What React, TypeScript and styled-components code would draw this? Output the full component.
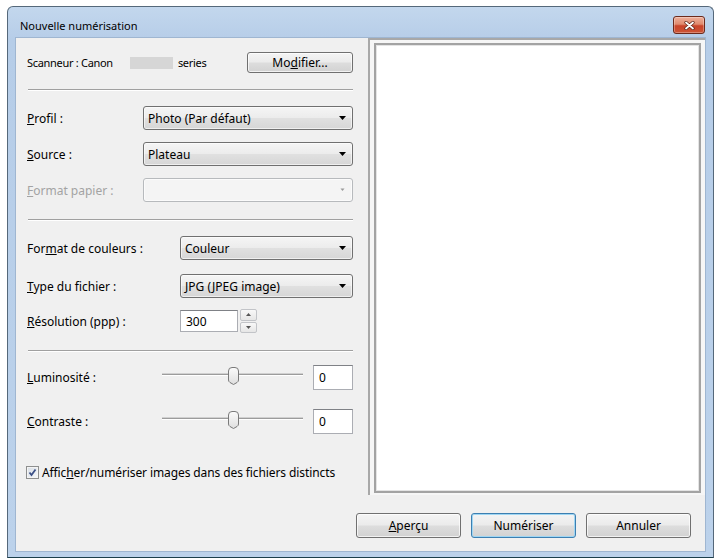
import React from 'react';
import styled, { createGlobalStyle } from 'styled-components';

const GlobalStyle = createGlobalStyle`
  html, body {
    margin: 0;
    padding: 0;
    background: #ffffff;
  }
  body {
    font-family: "Noto Sans", "Open Sans", sans-serif;
    font-size: 12px;
    color: #000;
  }
`;

// cadre de la fenêtre
const Window = styled.div`
  margin: 6px 0 0 7px;
  width: 707px;
  height: 552px;
  box-sizing: border-box;
  border: 1px solid #55687a;
  border-bottom-color: #1c3f4c;
  border-radius: 6px 6px 0 0;
  background: linear-gradient(180deg, #c3d7ed 0%, #b6cde8 6%, #bcd2eb 100%);
  padding: 0 8px 6px;
  display: flex;
  flex-direction: column;
`;

const TitleBar = styled.div`
  height: 31px;
  flex-shrink: 0;
  box-sizing: border-box;
  padding: 5px 0 0 4px;
  display: flex;
  align-items: center;
  justify-content: space-between;
`;

const Title = styled.span`
  font-size: 11px;
  color: #000;
`;

const CloseButton = styled.div`
  width: 32px;
  height: 18px;
  box-sizing: border-box;
  border: 1px solid #6b2a1c;
  border-radius: 3px;
  background: linear-gradient(180deg, #eeb09c 0%, #e08a6e 45%, #c9442a 55%, #cc5436 100%);
  box-shadow: inset 0 0 0 1px rgba(255, 255, 255, 0.3);
  display: flex;
  align-items: center;
  justify-content: center;
`;

const Client = styled.div`
  flex: 1;
  background: #f0f0f0;
  box-shadow: 0 0 0 1px #9fb6d1;
  display: flex;
  flex-direction: column;
`;

const TopRow = styled.div`
  display: flex;
  height: 457px;
`;

const LeftPanel = styled.div`
  width: 352px;
  flex-shrink: 0;
  box-sizing: border-box;
  padding: 0 15px 0 11px;
  display: flex;
  flex-direction: column;
`;

const PreviewOuter = styled.div`
  flex: 1;
  border-left: 2px solid #a8a8a8;
  border-top: 2px solid #a8a8a8;
  padding: 3px 4px 2px 4px;
  background: #f6f6f6;
  display: flex;
`;

const PreviewBox = styled.div`
  flex: 1;
  border: 2px solid #a3a3a3;
  background: #ffffff;
  box-shadow: inset 0 0 0 1px #e4e4e4;
`;

const ButtonRow = styled.div`
  display: flex;
  justify-content: flex-end;
  gap: 10px;
  padding: 18px 14px 0 0;
`;

const Button = styled.div<{ $primary?: boolean; $width?: number }>`
  width: ${(p) => p.$width ?? 105}px;
  height: ${(p) => (p.$width ? 21 : 25)}px;
  box-sizing: border-box;
  border: 1px solid ${(p) => (p.$primary ? '#3c7fb1' : '#707070')};
  border-radius: 3px;
  background: linear-gradient(180deg, #f4f4f4 0%, #ebebeb 48%, #dddddd 52%, #d2d2d2 100%);
  box-shadow: inset 0 0 0 1px ${(p) => (p.$primary ? '#9fd6f3' : 'rgba(255,255,255,0.7)')};
  display: flex;
  align-items: center;
  justify-content: center;
  flex-shrink: 0;
`;

const Row = styled.div<{ $top: number; $height?: number }>`
  display: flex;
  align-items: center;
  margin-top: ${(p) => p.$top}px;
  height: ${(p) => p.$height ?? 24}px;
`;

const ScannerText = styled.span`
  font-size: 11px;
  letter-spacing: -0.3px;
`;

const Label = styled.span<{ $width: number; $disabled?: boolean }>`
  width: ${(p) => p.$width}px;
  flex-shrink: 0;
  color: ${(p) => (p.$disabled ? '#a3a3a3' : '#000')};
`;

const Key = styled.span`
  text-decoration: underline;
`;

const Separator = styled.div<{ $top: number }>`
  margin: ${(p) => p.$top}px 0 0 1px;
  height: 1px;
  background: #a0a0a0;
  border-bottom: 1px solid #ffffff;
`;

const Redacted = styled.span`
  display: inline-block;
  width: 43px;
  height: 12px;
  margin: 0 5px 0 17px;
  background: #d6d6d6;
`;

const Combo = styled.div<{ $disabled?: boolean }>`
  flex: 1;
  height: 100%;
  box-sizing: border-box;
  border: 1px solid ${(p) => (p.$disabled ? '#b7babd' : '#707070')};
  border-radius: 3px;
  background: ${(p) =>
    p.$disabled
      ? '#f4f4f4'
      : 'linear-gradient(180deg, #f5f5f5 0%, #ececec 48%, #e0e0e0 52%, #d6d6d6 100%)'};
  box-shadow: inset 0 0 0 1px rgba(255, 255, 255, 0.6);
  display: flex;
  align-items: center;
  justify-content: space-between;
  padding: 0 6px 0 4px;
`;

const TextBox = styled.div<{ $width: number; $height: number }>`
  width: ${(p) => p.$width}px;
  height: ${(p) => p.$height}px;
  box-sizing: border-box;
  border: 1px solid #abadb3;
  border-top-color: #7f8186;
  background: #ffffff;
  display: flex;
  align-items: center;
  padding-left: 5px;
  flex-shrink: 0;
`;

const Spinner = styled.div`
  width: 17px;
  height: 24px;
  margin-left: 2px;
  display: flex;
  flex-direction: column;
  gap: 1px;
`;

const SpinHalf = styled.div`
  flex: 1;
  box-sizing: border-box;
  border: 1px solid #c2c4c8;
  border-radius: 2px;
  background: linear-gradient(180deg, #f8f8f8, #e6e6e6);
  display: flex;
  align-items: center;
  justify-content: center;
`;

const Slider = styled.div`
  position: relative;
  width: 141px;
  height: 100%;
  margin-right: 10px;
  flex-shrink: 0;
`;

const Track = styled.div`
  position: absolute;
  left: 0;
  right: 0;
  top: 8px;
  height: 1px;
  background: #9c9c9c;
  border-top: 1px solid #d0d0d0;
  border-bottom: 1px solid #ffffff;
`;

const Thumb = styled.svg`
  position: absolute;
  left: 65px;
  top: 2px;
`;

const CheckBox = styled.div`
  width: 13px;
  height: 13px;
  box-sizing: border-box;
  border: 1px solid #8e8f8f;
  background: linear-gradient(135deg, #d9dfe6, #f5f7fa);
  box-shadow: inset 0 0 0 1px #f4f4f4;
  display: flex;
  align-items: center;
  justify-content: center;
  margin: 0 3px 0 -1px;
`;

const CheckLabel = styled.span`
  letter-spacing: -0.1px;
`;

const Arrow = ({ disabled }: { disabled?: boolean }) => (
  <svg width="7" height="4" viewBox="0 0 7 4">
    <polygon points={disabled ? '1.5,0.5 5.5,0.5 3.5,3' : '0,0 7,0 3.5,4'} fill={disabled ? '#9a9a9a' : '#000'} />
  </svg>
);

const SliderThumb = () => (
  <Thumb width="13" height="18" viewBox="0 0 13 18">
    <defs>
      <linearGradient id="thumbFill" x1="0" y1="0" x2="0" y2="1">
        <stop offset="0" stopColor="#fbfbfb" />
        <stop offset="1" stopColor="#dedede" />
      </linearGradient>
    </defs>
    <path
      d="M1.5 4 Q1.5 0.5 5 0.5 H8 Q11.5 0.5 11.5 4 V13 Q11.5 14.5 10 15.5 L6.5 17.5 L3 15.5 Q1.5 14.5 1.5 13 Z"
      fill="url(#thumbFill)"
      stroke="#7a7a7a"
    />
  </Thumb>
);

const SliderRow = ({ top, label }: { top: number; label: React.ReactNode }) => (
  <Row $top={top} $height={25}>
    <Label $width={135}>{label}</Label>
    <Slider>
      <Track />
      <SliderThumb />
    </Slider>
    <TextBox $width={40} $height={25}>0</TextBox>
  </Row>
);

export default function App() {
  return (
    <>
      <GlobalStyle />
      <Window>
        <TitleBar>
          <Title>Nouvelle numérisation</Title>
          <CloseButton>
            <svg width="11" height="9" viewBox="0 0 11 9">
              <path d="M2 1.5 L9 7.5 M9 1.5 L2 7.5" stroke="#5a2418" strokeWidth="3.2" strokeLinecap="round" />
              <path d="M2 1.5 L9 7.5 M9 1.5 L2 7.5" stroke="#ffffff" strokeWidth="1.8" strokeLinecap="round" />
            </svg>
          </CloseButton>
        </TitleBar>

        <Client>
          <TopRow>
            <LeftPanel>
              <Row $top={14} $height={21}>
                <ScannerText>Scanneur : Canon</ScannerText>
                <Redacted />
                <ScannerText>series</ScannerText>
                <div style={{ flex: 1 }} />
                <Button $width={106}>
                  Mo<Key>d</Key>ifier...
                </Button>
              </Row>

              <Separator $top={16} />

              <Row $top={15}>
                <Label $width={116}>
                  <Key>P</Key>rofil :
                </Label>
                <Combo>
                  <span>Photo (Par défaut)</span>
                  <Arrow />
                </Combo>
              </Row>
              <Row $top={12}>
                <Label $width={116}>
                  <Key>S</Key>ource :
                </Label>
                <Combo>
                  <span>Plateau</span>
                  <Arrow />
                </Combo>
              </Row>
              <Row $top={12}>
                <Label $width={116} $disabled>
                  <Key>F</Key>ormat papier :
                </Label>
                <Combo $disabled>
                  <span />
                  <Arrow disabled />
                </Combo>
              </Row>

              <Separator $top={17} />

              <Row $top={15}>
                <Label $width={153}>
                  For<Key>m</Key>at de couleurs :
                </Label>
                <Combo>
                  <span>Couleur</span>
                  <Arrow />
                </Combo>
              </Row>
              <Row $top={14}>
                <Label $width={153}>
                  <Key>T</Key>ype du fichier :
                </Label>
                <Combo>
                  <span>JPG (JPEG image)</span>
                  <Arrow />
                </Combo>
              </Row>
              <Row $top={11}>
                <Label $width={153}>
                  <Key>R</Key>ésolution (ppp) :
                </Label>
                <TextBox $width={58} $height={22}>300</TextBox>
                <Spinner>
                  <SpinHalf>
                    <svg width="5" height="3" viewBox="0 0 5 3">
                      <polygon points="0,3 5,3 2.5,0" fill="#555" />
                    </svg>
                  </SpinHalf>
                  <SpinHalf>
                    <svg width="5" height="3" viewBox="0 0 5 3">
                      <polygon points="0,0 5,0 2.5,3" fill="#555" />
                    </svg>
                  </SpinHalf>
                </Spinner>
              </Row>

              <Separator $top={17} />

              <SliderRow
                top={13}
                label={
                  <>
                    <Key>L</Key>uminosité :
                  </>
                }
              />
              <SliderRow
                top={19}
                label={
                  <>
                    <Key>C</Key>ontraste :
                  </>
                }
              />

              <Row $top={31} $height={14}>
                <CheckBox>
                  <svg width="9" height="9" viewBox="0 0 9 9">
                    <path d="M1.5 4.5 L3.5 7 L7.5 1.5" fill="none" stroke="#3b4f86" strokeWidth="1.8" />
                  </svg>
                </CheckBox>
                <CheckLabel>
                  Affic<Key>h</Key>er/numériser images dans des fichiers distincts
                </CheckLabel>
              </Row>
            </LeftPanel>

            <PreviewOuter>
              <PreviewBox />
            </PreviewOuter>
          </TopRow>

          <ButtonRow>
            <Button>
              <span>
                <Key>A</Key>perçu
              </span>
            </Button>
            <Button $primary>Numériser</Button>
            <Button>Annuler</Button>
          </ButtonRow>
        </Client>
      </Window>
    </>
  );
}
